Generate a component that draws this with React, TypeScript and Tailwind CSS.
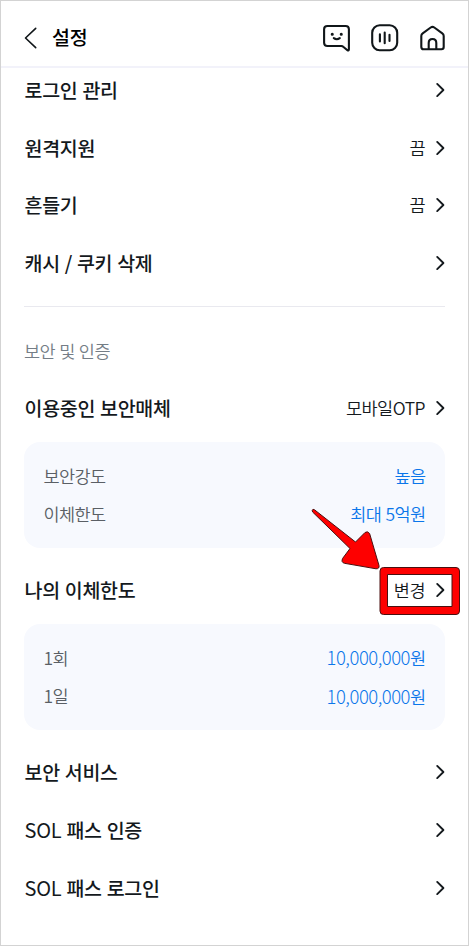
import React from "react";

function Chevron() {
  return (
    <svg className="ml-[10px] h-4 w-[10px] shrink-0" viewBox="0 0 10 16" fill="none" stroke="#14191d" strokeWidth="1.9" strokeLinecap="round" strokeLinejoin="round">
      <path d="M2.200 1.900 8.400 8l-6.200 6.100" />
    </svg>
  );
}

function Row({ latin, label, value }: { latin?: string; label: string; value?: string }) {
  return (
    <div className="flex h-[57.7px] shrink-0 items-center">
      <span className="flex-1 pl-[0.5px] text-[19.5px] leading-7 font-medium tracking-[-0.28px] [word-spacing:0.8px] whitespace-pre text-[#14191d]">
        {latin && <span className="text-[20px] font-normal tracking-[-0.2px]">{latin}</span>}
        {label}
      </span>
      {value && <span className="text-[17.5px] leading-7 font-[350] tracking-[-0.5px] text-[#14191d]">{value}</span>}
      <Chevron />
    </div>
  );
}

type Item = { name: string; amount?: string; value: string };

function Card({ items }: { items: Item[] }) {
  return (
    <div className="flex h-[106px] shrink-0 flex-col justify-center rounded-2xl bg-[#f7f9fe] pr-[19.5px] pl-[19.5px]">
      {items.map(({ name, amount, value }) => (
        <div key={name} className="flex h-[38.5px] items-center justify-between text-[17.5px] font-[350] tracking-[-0.6px] [word-spacing:1px]">
          <span className="text-[#5a5f65]">{name}</span>
          <span className="text-[#0b76ea]">
            {amount && <span className="text-[18.5px] font-light tracking-[-0.5px]">{amount}</span>}
            {value}
          </span>
        </div>
      ))}
    </div>
  );
}

function HeaderIcons() {
  return (
    <div className="flex items-center gap-[20px]">
      <svg className="h-7 w-7" viewBox="0 0 28 28" fill="none" stroke="#101619" strokeWidth="2.1" strokeLinecap="round" strokeLinejoin="round">
        <path d="M4.400 2h18.200q3.300 0 3.300 3.300v20q0 1.500-1.500.9l-4.200-3.500q-.7-.7-1.800-.7H4.400q-3.300 0-3.300-3.300V5.300Q1.100 2 4.400 2Z" />
        <path d="M9.200 10.200h.1M18.200 10.200h.1" strokeWidth="3" />
        <path d="M10.800 14.200q3 2 6 0" />
      </svg>
      <svg className="h-7 w-7" viewBox="0 0 28 28" fill="none" stroke="#101619" strokeWidth="2.1" strokeLinecap="round">
        <rect x="1.200" y="1.200" width="25" height="25" rx="7.500" />
        <path d="M8.900 10.200v7.200M13.700 8.500v10.700M18.500 10.800v6.200" />
      </svg>
      <svg className="h-7 w-7" viewBox="0 0 28 28" fill="none" stroke="#101619" strokeWidth="2.1" strokeLinecap="round" strokeLinejoin="round">
        <path d="M11.700 3.500q1.800-1.200 3.600 0l8 5.800q1.400 1 1.400 2.800V23q0 2.200-2.200 2.200h-18Q2.300 25.200 2.300 23V12.100q0-1.800 1.400-2.800Z" />
        <path d="M9.700 25v-6q0-4 3.800-4t3.800 4v6" />
      </svg>
    </div>
  );
}

export default function App() {
  return (
    <div className="relative flex h-[946px] w-[469px] flex-col overflow-hidden border border-[#d3d3d3] bg-white font-['Noto_Sans_CJK_KR',sans-serif]">
      <header className="flex h-[67px] shrink-0 items-center border-b-2 border-[#f2f2fa] pr-[21px] pl-[23px] pt-[8px]">
        <svg className="h-[22px] w-[13px]" viewBox="0 0 13 22" fill="none" stroke="#101619" strokeWidth="1.6" strokeLinecap="round" strokeLinejoin="round">
          <path d="M11.700 1.300 1.500 11l10.200 9.700" />
        </svg>
        <h1 className="mb-[2px] ml-[15px] flex-1 text-[19.5px] leading-7 font-medium tracking-[-0.2px] text-black">설정</h1>
        <HeaderIcons />
      </header>
      <main className="flex flex-1 flex-col px-[23px]">
        <div className="-mt-[7px]">
          <Row label="로그인 관리" />
          <Row label="원격지원" value="끔" />
          <Row label="흔들기" value="끔" />
          <Row label="캐시 / 쿠키 삭제" />
        </div>
        <div className="mt-[14px] h-px shrink-0 bg-[#e9e9ef]" />
        <h2 className="mt-[30px] h-7 shrink-0 text-[17.5px] leading-7 font-[350] tracking-[-0.5px] [word-spacing:0.6px] text-[#747d86]">보안 및 인증</h2>
        <div className="mt-[14px]">
          <Row label="이용중인 보안매체" value="모바일OTP" />
        </div>
        <div className="mt-[5.5px]">
          <Card items={[{ name: "보안강도", value: "높음" }, { name: "이체한도", value: "최대 5억원" }]} />
        </div>
        <div className="mt-[13.5px]">
          <Row label="나의 이체한도" value="변경" />
        </div>
        <div className="mt-[5px]">
          <Card items={[{ name: "1회", amount: "10,000,000", value: "원" }, { name: "1일", amount: "10,000,000", value: "원" }]} />
        </div>
        <div className="mt-[13.5px]">
          <Row label="보안 서비스" />
          <Row latin="SOL" label=" 패스 인증" />
          <Row latin="SOL" label=" 패스 로그인" />
        </div>
      </main>
      <svg className="pointer-events-none absolute -top-px -left-px h-[946px] w-[469px]" viewBox="0 0 469 946" fill="#fe0000" stroke="#4a1010" strokeWidth="1" strokeLinejoin="round">
        <path d="M312.200 510.200q.5-1.500 2.200-.5L355.500 542l9.500-9.500q2.600-1.800 4.600 1l9.400 32q.6 3.400-3 3.300l-31.500-5.500q-3.800-1-1.800-5l7.300-9.800L312.600 512Z" />
        <path fillRule="evenodd" d="M383.500 567.500h72.500q3.500 0 3.500 3.500v40q0 3.500-3.500 3.500h-72.500q-3.500 0-3.500-3.500v-40q0-3.500 3.500-3.500ZM387.500 574.500v32h64.500v-32Z" />
      </svg>
    </div>
  );
}
